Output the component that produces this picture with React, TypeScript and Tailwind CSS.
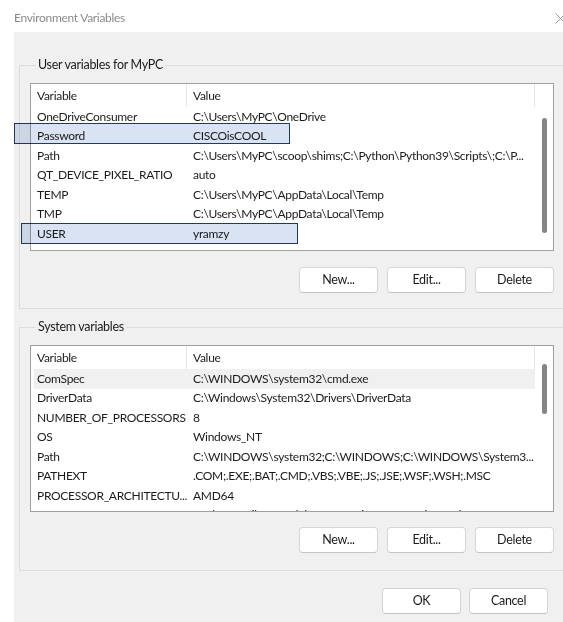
import React from "react";

type Row = [string, string];

const userVars: Row[] = [
  ["OneDriveConsumer", "C:\\Users\\MyPC\\OneDrive"],
  ["Password", "CISCOisCOOL"],
  ["Path", "C:\\Users\\MyPC\\scoop\\shims;C:\\Python\\Python39\\Scripts\\;C:\\P..."],
  ["QT_DEVICE_PIXEL_RATIO", "auto"],
  ["TEMP", "C:\\Users\\MyPC\\AppData\\Local\\Temp"],
  ["TMP", "C:\\Users\\MyPC\\AppData\\Local\\Temp"],
  ["USER", "yramzy"],
];

const systemVars: Row[] = [
  ["ComSpec", "C:\\WINDOWS\\system32\\cmd.exe"],
  ["DriverData", "C:\\Windows\\System32\\Drivers\\DriverData"],
  ["NUMBER_OF_PROCESSORS", "8"],
  ["OS", "Windows_NT"],
  ["Path", "C:\\WINDOWS\\system32;C:\\WINDOWS;C:\\WINDOWS\\System3..."],
  ["PATHEXT", ".COM;.EXE;.BAT;.CMD;.VBS;.VBE;.JS;.JSE;.WSF;.WSH;.MSC"],
  ["PROCESSOR_ARCHITECTU...", "AMD64"],
  ["PROCESSOR_IDENTIFIER", "Intel64 Family 6 Model 142 Stepping 12, GenuineIntel"],
];

const Button = ({ label }: { label: string }) => (
  <button className="w-[79px] h-[26px] bg-white border border-[#d5d5d5] border-b-[#c4c4c4] rounded-[4px] text-[12.5px] text-[#1b1b1b]">
    {label}
  </button>
);

const VarList = ({
  rows,
  height,
  hover,
  thumbTop,
  thumbHeight,
}: {
  rows: Row[];
  height: string;
  hover?: number;
  thumbTop: string;
  thumbHeight: string;
}) => (
  <div className={`flex w-[524px] ${height} border border-[#a0a0a0] bg-white overflow-hidden`}>
    <div className="w-[504px] flex flex-col">
      <div className="flex h-[23px] shrink-0 border-r border-[#e5e5e5] text-[#1b1b1b]">
        <div className="w-[156px] pl-[6px] flex items-center border-r border-[#e5e5e5]">Variable</div>
        <div className="pl-[6px] flex items-center">Value</div>
      </div>
      {rows.map(([name, value], i) => (
        <div
          key={name + i}
          className={`flex h-[19.5px] shrink-0 items-center ml-[3px] text-[#1b1b1b] ${
            hover === i ? "bg-[#f0f0f0]" : ""
          }`}
        >
          <div className="w-[153px] pl-[3px] whitespace-nowrap overflow-hidden">{name}</div>
          <div className="flex-1 pl-[6px] whitespace-nowrap overflow-hidden">{value}</div>
        </div>
      ))}
    </div>
    <div className={`w-[18px] flex flex-col ${thumbTop}`}>
      <div className={`w-[5px] ml-[7px] ${thumbHeight} rounded-full bg-[#858585]`} />
    </div>
  </div>
);

export default function App() {
  return (
    <div className="relative w-[563px] h-[622px] bg-white overflow-hidden font-['Lato',sans-serif] text-[12px] tracking-[-0.3px]">
      <div className="flex h-[32px] items-center justify-between pl-[14px] pt-[4px]">
        <span className="text-[#8a8a8a]">Environment Variables</span>
        <svg width="11" height="11" viewBox="0 0 11 11" className="mr-[-3px]">
          <path d="M0.5 0.5 L10.5 10.5 M10.5 0.5 L0.5 10.5" stroke="#9a9a9a" strokeWidth="1" />
        </svg>
      </div>

      <div className="ml-[14px] h-[590px] bg-[#f0f0f0] pl-[5px] pt-[25px] overflow-hidden">
        <fieldset className="w-[560px] border border-[#dcdcdc] pl-[10px] pb-[15px]">
          <legend className="ml-[6px] px-[2px] leading-[16px] text-[12.5px] text-[#1b1b1b]">User variables for MyPC</legend>
          <div className="mt-[10px]">
            <VarList rows={userVars} height="h-[168px]" thumbTop="pt-[34px]" thumbHeight="h-[115px]" />
          </div>
          <div className="w-[524px] flex justify-end gap-[9px] mt-[16px]">
            <Button label="New..." />
            <Button label="Edit..." />
            <Button label="Delete" />
          </div>
        </fieldset>

        <fieldset className="mt-[10px] w-[560px] border border-[#dcdcdc] pl-[10px] pb-[17px]">
          <legend className="ml-[6px] px-[2px] leading-[16px] text-[12.5px] text-[#1b1b1b]">System variables</legend>
          <div className="mt-[10px]">
            <VarList rows={systemVars} height="h-[167px]" hover={0} thumbTop="pt-[18px]" thumbHeight="h-[50px]" />
          </div>
          <div className="w-[524px] flex justify-end gap-[9px] mt-[15px]">
            <Button label="New..." />
            <Button label="Edit..." />
            <Button label="Delete" />
          </div>
        </fieldset>

        <div className="w-[529px] flex justify-end gap-[8px] mt-[17px]">
          <Button label="OK" />
          <Button label="Cancel" />
        </div>
      </div>

      <div className="absolute left-[14px] top-[123px] w-[276px] h-[21px] border-[1.5px] border-[#1f3864] bg-[#b4c7e7]/50 mix-blend-multiply" />
      <div className="absolute left-[21px] top-[223px] w-[277px] h-[21px] border-[1.5px] border-[#1f3864] bg-[#b4c7e7]/50 mix-blend-multiply" />
    </div>
  );
}
